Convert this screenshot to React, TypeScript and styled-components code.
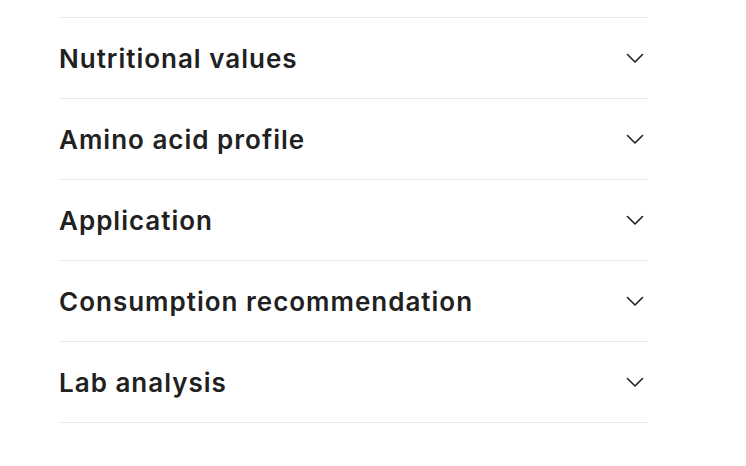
import React from "react";
import styled, { createGlobalStyle } from "styled-components";

const Global = createGlobalStyle`
  html, body { margin: 0; padding: 0; background: #ffffff; }
  body { font-family: Inter, "Noto Sans", sans-serif; }
`;

const Page = styled.div`
  padding: 17px 0 0 59px;
`;

const List = styled.div`
  width: 589px;
  border-top: 1px solid #e8e8e8;
`;

const Row = styled.div`
  display: flex;
  align-items: center;
  justify-content: space-between;
  height: 80px;
  border-bottom: 1px solid #e8e8e8;
`;

const Title = styled.h3`
  margin: 0;
  font-family: Inter, "Noto Sans", sans-serif;
  font-size: 26px;
  font-weight: 600;
  color: #212121;
  letter-spacing: 1px;
`;

const Chevron = styled.svg`
  width: 24px;
  height: 24px;
  margin-right: 1px;
  color: #212121;
`;

const items = [
  "Nutritional values",
  "Amino acid profile",
  "Application",
  "Consumption recommendation",
  "Lab analysis",
];

export default function App() {
  return (
    <>
      <Global />
      <Page>
        <List>
          {items.map((t) => (
            <Row key={t}>
              <Title>{t}</Title>
              <Chevron viewBox="0 0 24 24" fill="none">
                <path d="M4.5 8.5 L12 16 L19.5 8.5" stroke="currentColor" strokeWidth="1.6" strokeLinecap="round" strokeLinejoin="round" />
              </Chevron>
            </Row>
          ))}
        </List>
      </Page>
    </>
  );
}
